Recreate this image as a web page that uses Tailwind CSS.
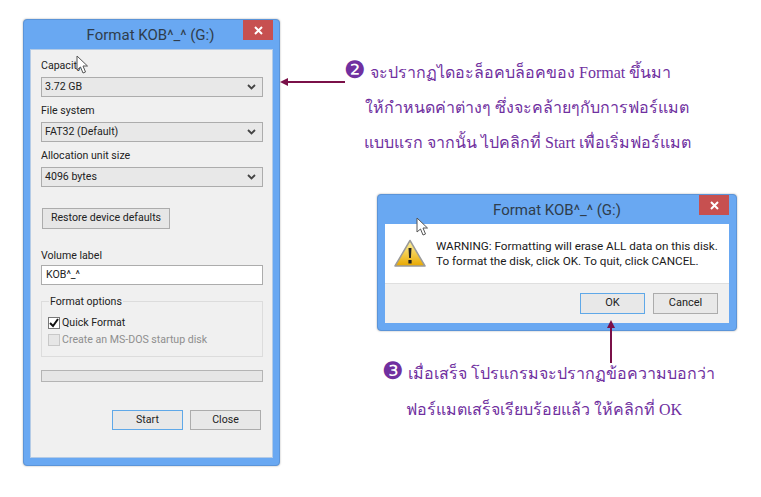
<!DOCTYPE html>
<html><head><meta charset="utf-8"><script src="https://cdn.jsdelivr.net/npm/@tailwindcss/browser@4"></script></head>
<body class="bg-white">
<div class="relative w-[761px] h-[497px] overflow-hidden bg-white font-['Roboto','Noto_Sans',sans-serif] text-[#222]">

<!-- Format window -->
<div class="absolute left-[23px] top-[19px] w-[257px] h-[447px] rounded-[4px] bg-[#69a8f2] border border-[#5b94d8] shadow-[0_0_2px_rgba(0,0,0,.35)] flex flex-col px-[6px] pb-[7px]">
  <div class="relative h-[29px] shrink-0 flex items-center justify-center text-[15px] text-[#2f3d4c] pr-[2px] pt-[2px]">Format KOB^_^ (G:)
    <div class="absolute right-0 top-0 w-[30px] h-[20px] bg-[#c75050] flex items-center justify-center"><svg width="9" height="9" viewBox="0 0 9 9"><path d="M1 1l7 7M8 1l-7 7" stroke="#fff" stroke-width="2"/></svg></div>
  </div>
  <div class="flex-1 bg-[#f0f0f0] border border-[#5b94d8]/40 px-[10px] text-[10.6px] flex flex-col">
    <div class="h-[27px] leading-[31px] shrink-0">Capacity:</div>
    <div class="h-[20px] w-[222px] shrink-0 border border-[#acacac] bg-[#e8e8e8] flex items-center justify-between pl-[3px] pr-[6px]"><span>3.72 GB</span><svg width="9" height="6" viewBox="0 0 9 6"><path d="M1 1l3.500 3.500L8 1" fill="none" stroke="#444" stroke-width="1.800"/></svg></div>
    <div class="h-[25px] leading-[28px] shrink-0">File system</div>
    <div class="h-[20px] w-[222px] shrink-0 border border-[#acacac] bg-[#e8e8e8] flex items-center justify-between pl-[3px] pr-[6px]"><span>FAT32 (Default)</span><svg width="9" height="6" viewBox="0 0 9 6"><path d="M1 1l3.500 3.500L8 1" fill="none" stroke="#444" stroke-width="1.800"/></svg></div>
    <div class="h-[25px] leading-[28px] shrink-0">Allocation unit size</div>
    <div class="h-[20px] w-[222px] shrink-0 border border-[#acacac] bg-[#e8e8e8] flex items-center justify-between pl-[3px] pr-[6px]"><span>4096 bytes</span><svg width="9" height="6" viewBox="0 0 9 6"><path d="M1 1l3.500 3.500L8 1" fill="none" stroke="#444" stroke-width="1.800"/></svg></div>
    <div class="mt-[21px] ml-[1px] h-[21px] w-[128px] shrink-0 border border-[#acacac] bg-[#e6e6e6] flex items-center justify-center pb-[1px]">Restore device defaults</div>
    <div class="mt-[19px] h-[16px] leading-[16px] shrink-0 mb-[1px]">Volume label</div>
    <div class="h-[20px] w-[222px] shrink-0 border border-[#acacac] bg-white flex items-center pl-[4px]">KOB^_^</div>
    <div class="relative mt-[16px] h-[56px] w-[222px] shrink-0 border border-[#dcdcdc] flex flex-col pl-[6px] pt-[15px] gap-[5px]">
      <div class="absolute left-[7px] top-[-7px] bg-[#f0f0f0] px-[1px] leading-[14px]">Format options</div>
      <div class="flex items-center gap-[1px] h-[12px]"><div class="w-[12px] h-[12px] border border-[#777] bg-white flex items-center justify-center"><svg width="10" height="10" viewBox="0 0 10 10"><path d="M1 5l3 3 5-7" fill="none" stroke="#111" stroke-width="2"/></svg></div><span class="ml-[1px]">Quick Format</span></div>
      <div class="flex items-center gap-[1px] h-[12px] text-[#8e8e8e]"><div class="w-[12px] h-[12px] border border-[#c8c8c8] bg-[#e6e6e6]"></div><span class="ml-[1px]">Create an MS-DOS startup disk</span></div>
    </div>
    <div class="mt-[13px] h-[12px] w-[222px] shrink-0 border border-[#b4b4b4] bg-[#e6e6e6]"></div>
    <div class="mt-[28px] w-[222px] flex justify-end gap-[7px] pr-[2px] shrink-0">
      <div class="w-[71px] h-[20px] border border-[#5fa8e8] bg-[#e8e8e8] flex items-center justify-center">Start</div>
      <div class="w-[71px] h-[20px] border border-[#acacac] bg-[#e8e8e8] flex items-center justify-center">Close</div>
    </div>
  </div>
</div>

<!-- cursor 1 -->
<svg class="absolute left-[76px] top-[55px]" width="13" height="20" viewBox="0 0 13 20"><path d="M1 1v14l3.500-3 2.500 6 2.500-1-2.500-6h4.500z" fill="#fff" stroke="#555" stroke-width="1"/></svg>

<!-- Arrow 1 -->
<svg class="absolute left-[279px] top-[77px]" width="67" height="10" viewBox="0 0 67 10"><path d="M1 5l8-4v3h57v2H9v3z" fill="#7a1048"/></svg>

<!-- Text 1 -->
<div class="absolute left-[344px] top-[56px] text-[#7030a0] text-[16px] font-['Liberation_Serif',serif] flex flex-col whitespace-nowrap">
  <div class="h-[35px] leading-[34px] flex"><span class="w-[26px] text-[24px] font-['DejaVu_Sans'] leading-[29px]">❷</span><span>จะปรากฏไดอะล็อคบล็อคของ Format ขึ้นมา</span></div>
  <div class="h-[36px] leading-[34px] pl-[21px]">ให้กำหนดค่าต่างๆ ซึ่งจะคล้ายๆกับการฟอร์แมต</div>
  <div class="h-[36px] leading-[32px] pl-[20px]">แบบแรก จากนั้น ไปคลิกที่ Start เพื่อเริ่มฟอร์แมต</div>
</div>

<!-- Warning window -->
<div class="absolute left-[377px] top-[194px] w-[360px] h-[137px] rounded-[4px] bg-[#69a8f2] border border-[#5b94d8] shadow-[0_0_2px_rgba(0,0,0,.35)] flex flex-col px-[7px] pb-[7px]">
  <div class="relative h-[29px] shrink-0 flex items-center justify-center text-[15px] text-[#2f3d4c] pt-[1px]">Format KOB^_^ (G:)
    <div class="absolute right-0 top-0 w-[30px] h-[20px] bg-[#c75050] flex items-center justify-center"><svg width="9" height="9" viewBox="0 0 9 9"><path d="M1 1l7 7M8 1l-7 7" stroke="#fff" stroke-width="2"/></svg></div>
  </div>
  <div class="flex-1 flex flex-col text-[11.7px]">
    <div class="h-[60px] bg-white flex items-center pl-[9px] gap-[10px] border-b border-[#dfdfdf]">
      <svg width="32" height="29" viewBox="0 0 32 29"><defs><linearGradient id="w" x1="0" y1="0" x2="0" y2="1"><stop offset="0" stop-color="#fff3a0"/><stop offset="1" stop-color="#e8a800"/></linearGradient></defs><path d="M16 1.500L31 27H1z" fill="url(#w)" stroke="#9a9a9a" stroke-width="1.500" stroke-linejoin="round"/><path d="M14.500 9h3l-.6 10h-1.800zM14.400 21h3.200v3.400h-3.200z" fill="#222"/></svg>
      <div class="leading-[15px] text-[#1a1a1a] whitespace-nowrap">WARNING: Formatting will erase ALL data on this disk.<br>To format the disk, click OK. To quit, click CANCEL.</div>
    </div>
    <div class="flex-1 bg-[#f0f0f0] flex items-center justify-end gap-[8px] pr-[11px] text-[11px]">
      <div class="w-[65px] h-[21px] border border-[#5fa8e8] bg-[#e8e8e8] flex items-center justify-center">OK</div>
      <div class="w-[65px] h-[21px] border border-[#acacac] bg-[#e8e8e8] flex items-center justify-center">Cancel</div>
    </div>
  </div>
</div>

<!-- cursor 2 -->
<svg class="absolute left-[416px] top-[217px]" width="13" height="20" viewBox="0 0 13 20"><path d="M1 1v14l3.500-3 2.500 6 2.500-1-2.500-6h4.500z" fill="#fff" stroke="#555" stroke-width="1"/></svg>

<!-- Arrow 2 -->
<svg class="absolute left-[606px] top-[319px]" width="10" height="45" viewBox="0 0 10 45"><path d="M5 1l4 8H6v35H4V9H1z" fill="#7a1048"/></svg>

<!-- Text 2 -->
<div class="absolute left-[382px] top-[357px] text-[#7030a0] text-[16px] font-['Liberation_Serif',serif] flex flex-col whitespace-nowrap">
  <div class="h-[36px] leading-[34px] flex"><span class="w-[26px] text-[24px] font-['DejaVu_Sans'] leading-[29px]">❸</span><span>เมื่อเสร็จ โปรแกรมจะปรากฏข้อความบอกว่า</span></div>
  <div class="h-[36px] leading-[34px] pl-[24px]">ฟอร์แมตเสร็จเรียบร้อยแล้ว ให้คลิกที่ OK</div>
</div>
</div>
</body></html>
